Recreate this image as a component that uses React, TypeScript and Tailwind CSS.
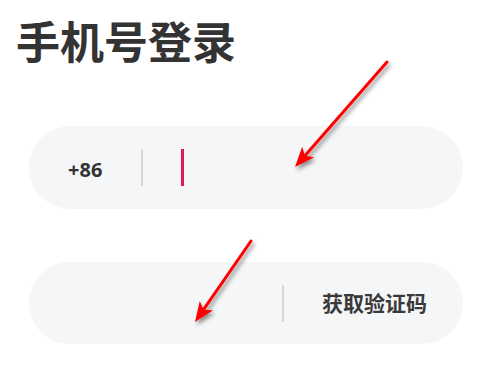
export default function App() {
  return (
    <div className="relative w-[486px] h-[374px] overflow-hidden bg-white font-['Noto_Sans','Noto_Sans_CJK_SC',sans-serif] text-[#333]">
      <h1 className="pl-4 pt-[20px] text-[44px] leading-[44px] font-bold">手机号登录</h1>

      {/* phone number */}
      <div className="mt-[62px] ml-[29px] flex h-[83px] w-[434px] items-center rounded-full bg-[#f5f6f8] pl-[39px]">
        <span className="pt-[4px] text-[20px] font-bold leading-none">+86</span>
        <div className="ml-[39px] h-[37px] w-[2px] bg-[#d6d6d6]" />
        <div className="ml-[38px] h-[37px] w-[3px] bg-[#e0185e]" />
      </div>

      {/* sms code */}
      <div className="mt-[53px] ml-[29px] flex h-[82px] w-[434px] items-center rounded-full bg-[#f5f6f8] pl-[253px]">
        <div className="h-[37px] w-[2px] bg-[#d6d6d6]" />
        <span className="ml-[38px] text-[21px] font-semibold leading-none whitespace-nowrap text-[#3a3a3a]">获取验证码</span>
      </div>

      <svg className="pointer-events-none absolute inset-0" width="486" height="374" viewBox="0 0 486 374">
        <defs>
          <filter id="sh" x="-20%" y="-20%" width="140%" height="140%">
            <feDropShadow dx="2" dy="3" stdDeviation="2" floodColor="#000" floodOpacity="0.45" />
          </filter>
        </defs>
        <g filter="url(#sh)">
          <line x1="387" y1="62" x2="304.9" y2="155.7" stroke="#ff0000" strokeWidth="3" strokeLinecap="round" />
          <polygon points="295,167 314.2,157.3 304.9,155.7 302.2,146.7" fill="#ff0000" />
          <line x1="251" y1="241" x2="203.5" y2="309.7" stroke="#ff0000" strokeWidth="3" strokeLinecap="round" />
          <polygon points="195,322 213,310.2 203.5,309.7 199.8,301.1" fill="#ff0000" />
        </g>
      </svg>
    </div>
  );
}
